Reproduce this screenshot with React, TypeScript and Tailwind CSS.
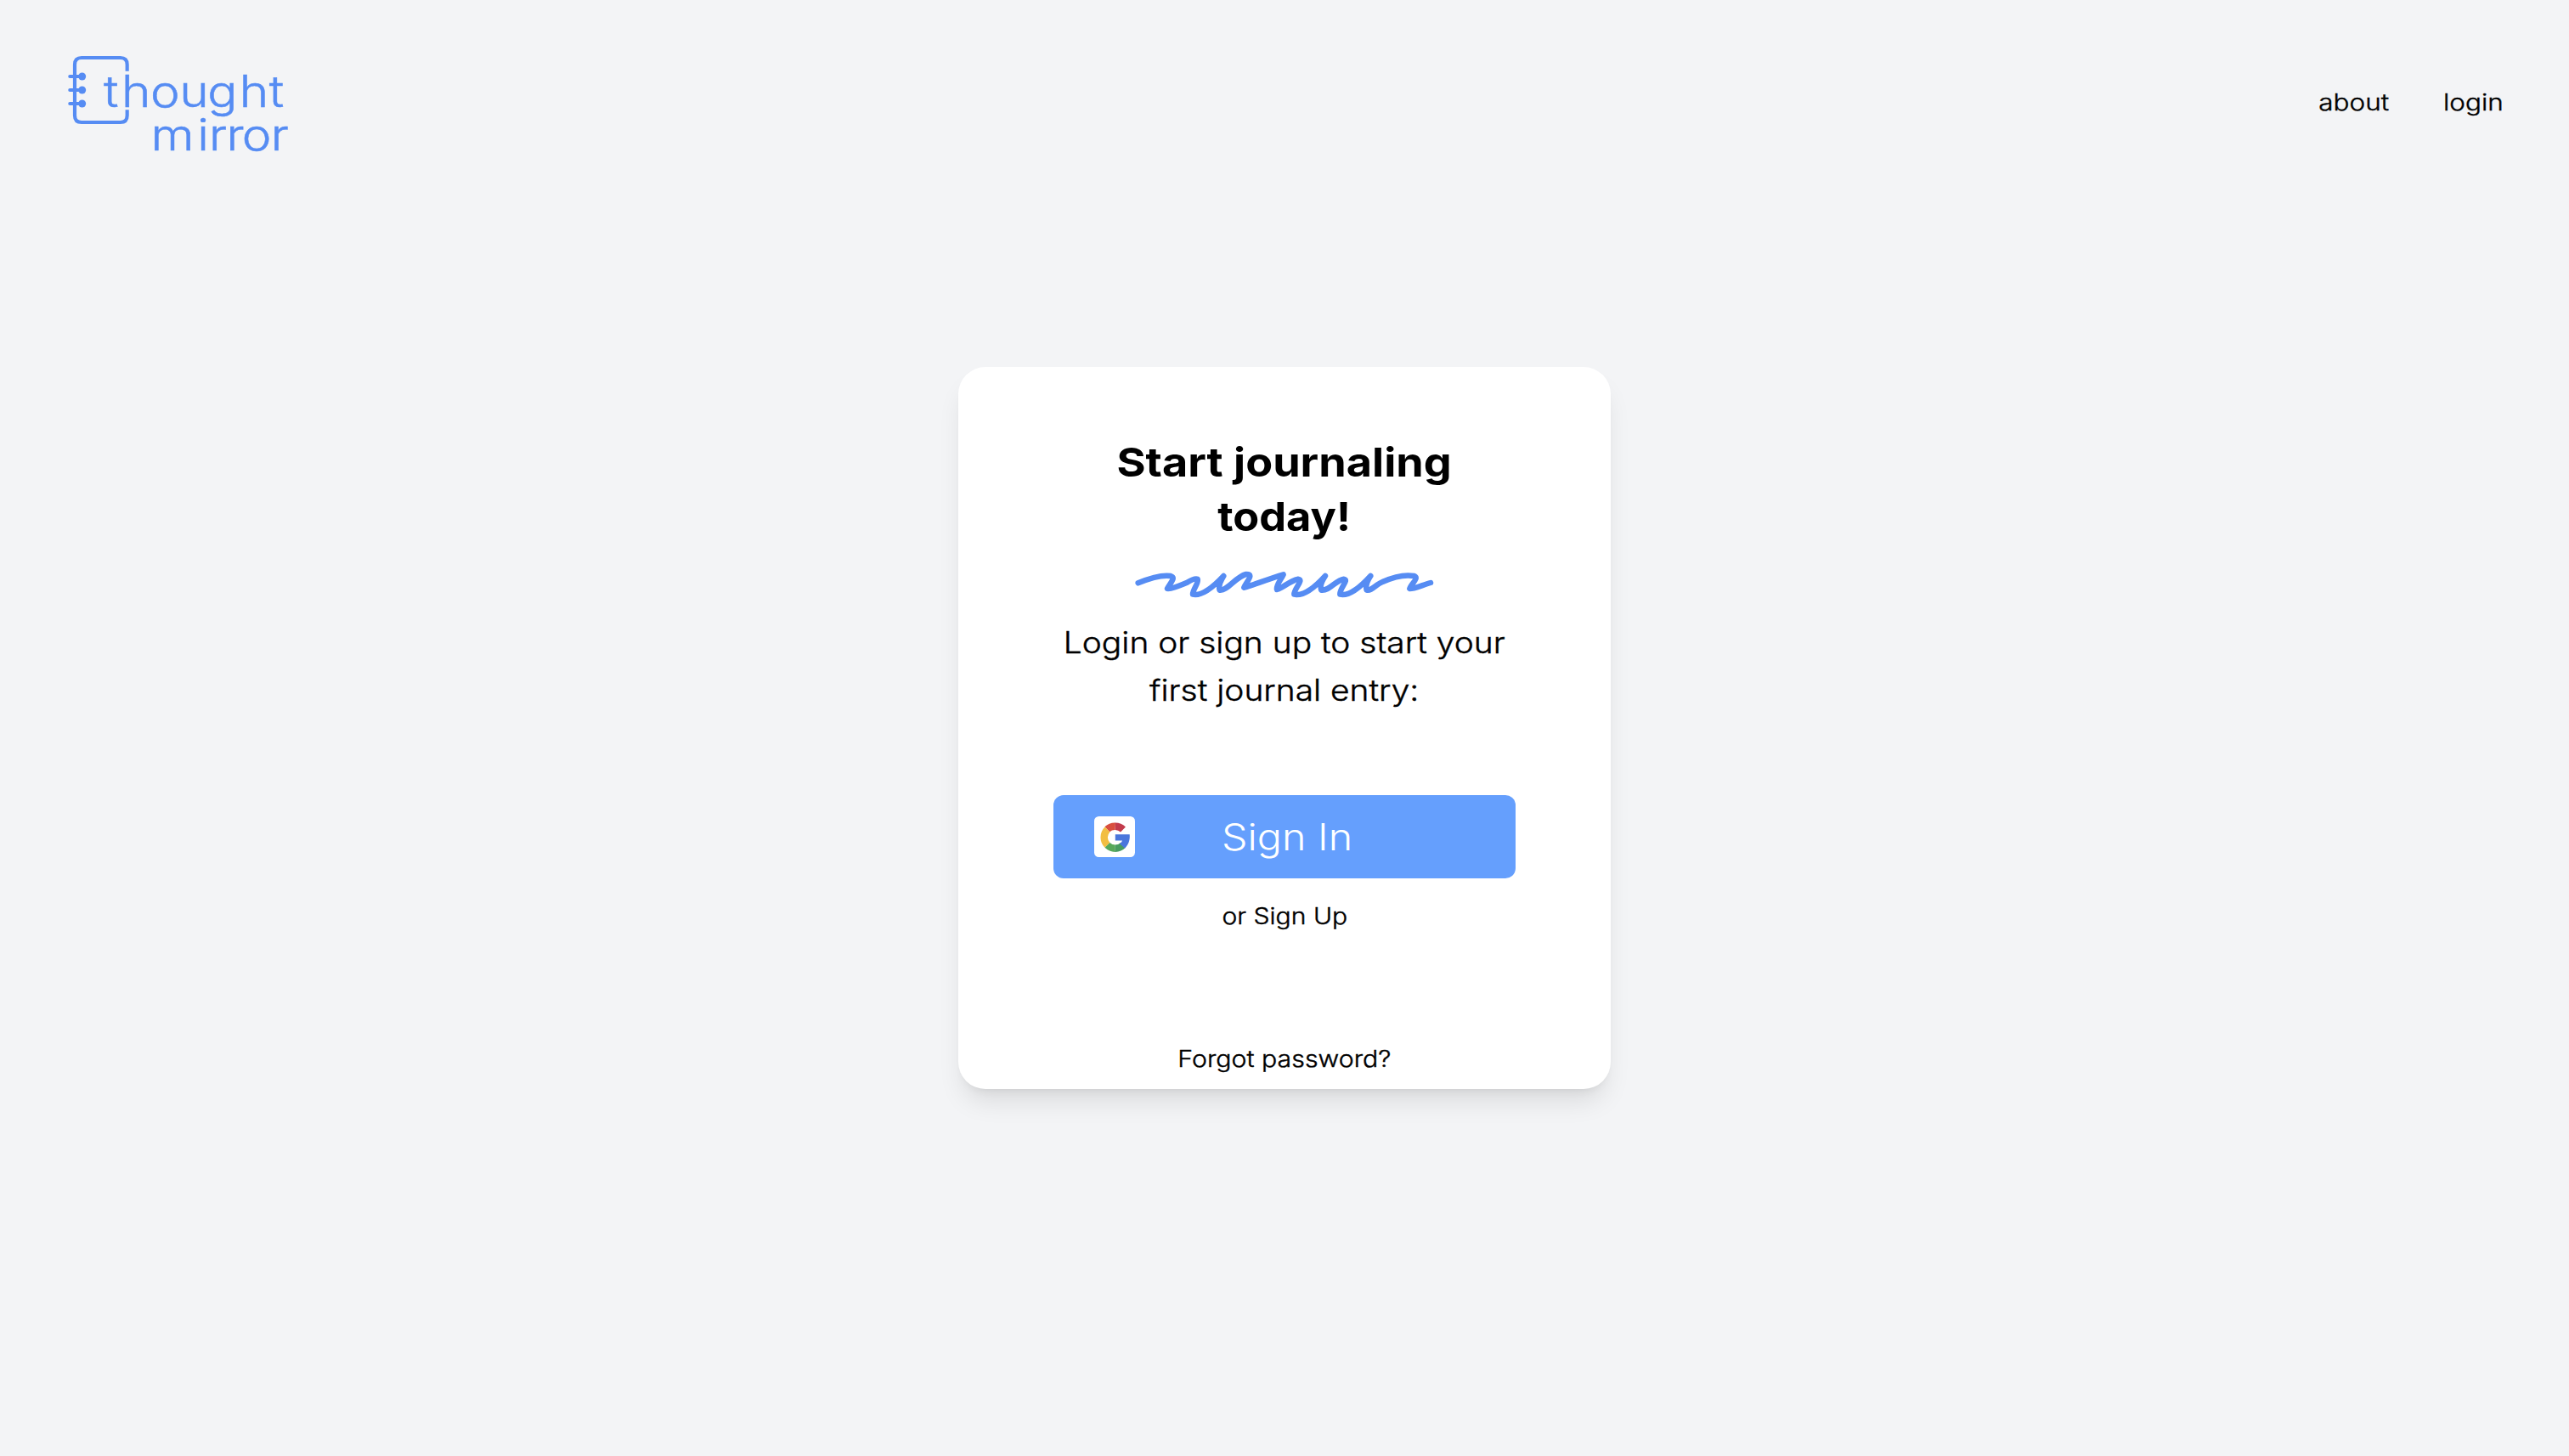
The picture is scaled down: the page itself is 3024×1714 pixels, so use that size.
import React from "react";

const Logo = () => (
  <svg
    viewBox="0 0 900 450"
    className="w-[300px] h-[150px]"
    fill="none"
    stroke="#568cf3"
    strokeWidth={12.5}
    strokeLinecap="round"
  >
    <path
      d="M269 101V78Q269 54 245 54H108Q84 54 84 78V258Q84 282 108 282H245Q269 282 269 258V238"
      strokeLinecap="butt"
    />
    {[120, 168, 216].map((y) => (
      <g key={y}>
        <path d={`M67 ${y}H110`} />
        <circle cx={110} cy={y} r={13.5} fill="#568cf3" stroke="none" />
      </g>
    ))}
    <g
      fill="#568cf3"
      strokeWidth={1.5}
      fontFamily="Inter, sans-serif"
      fontSize={154}
      fontWeight={300}
      transform="scale(1.14 1)"
    >
      <text x="163 218.4 307.9 398.2 485 583.3 675.4" y={227}>
        thought
      </text>
      <text x="309 453 489.5 543.5 591.5 681" y={382}>
        mirror
      </text>
    </g>
  </svg>
);

const Squiggle = () => (
  <svg viewBox="0 0 1140 180" className="w-[380px] h-[60px]" fill="none">
    <path
      d="M59 79C95 64 140 49 174 54C194 60 172 78 162 99C166 104 208 87 232 77C248 67 262 62 269 65C274 80 252 100 252 119C282 126 318 100 361 54C350 72 342 90 347 104C374 108 402 58 440 48C472 46 440 76 433 95C445 94 520 64 572 49C562 70 546 86 549 102C570 96 598 70 624 65C646 67 610 98 610 119C640 126 680 98 720 54C708 72 700 90 706 104C734 108 758 68 785 65C806 67 770 98 772 119C802 126 840 98 880 54C868 72 862 90 866 104C884 108 898 84 922 75C955 60 1000 48 1034 54C1052 62 1024 80 1018 99C1026 102 1064 86 1092 78"
      stroke="#568cf3"
      strokeWidth={19.5}
      strokeLinecap="round"
      strokeLinejoin="round"
    />
  </svg>
);

const GoogleIcon = () => (
  <svg viewBox="0 0 48 48" className="w-12 h-12">
    <rect width="48" height="48" rx="5.5" fill="#fff" />
    <g fill="none" strokeWidth="8.4">
      <path d="M15.3 15.3A13 13 0 0 1 24.8 11.7" stroke="#d94f3e" />
      <path d="M24.8 11.7A13 13 0 0 1 34 15.5" stroke="#c23b4c" />
      <path d="M15.5 15.5A13 13 0 0 0 15.5 33.9" stroke="#f2be42" />
      <path d="M15.5 33.9A13 13 0 0 0 24.8 37.7" stroke="#57a85a" />
      <path d="M24.8 37.7A13 13 0 0 0 34 33.9" stroke="#489c60" />
    </g>
    <path
      d="M24.8 21.3H41.7C42.4 28 40.2 33.6 36 37.6L30 32.2C31.6 31.2 32.6 30 33 28.6H24.8Z"
      fill="#4a76dc"
    />
  </svg>
);

const navLinks = ["about", "login"];

const App = () => {
  return (
    <div className="h-[1714px] bg-gray-100 text-black font-[Inter,sans-serif]">
      <header className="flex items-start justify-between pt-[50px] pl-[60px] pr-[77px]">
        <Logo />
        <nav className="flex gap-[74px] pt-[51px] text-[27px] leading-10 font-light [-webkit-text-stroke:0.4px]">
          {navLinks.map((link) => (
            <a
              key={link}
              href="#"
              className="inline-block origin-right scale-x-[1.165]"
            >
              {link}
            </a>
          ))}
        </nav>
      </header>

      <main className="flex justify-center pt-[232px]">
        <div className="flex flex-col items-center w-[768px] h-[850px] pt-20 rounded-[32px] bg-white text-center shadow-[0_20px_30px_-6px_rgba(0,0,0,0.1),0_8px_12px_-8px_rgba(0,0,0,0.1)]">
          <h1 className="text-[47px] leading-16 font-bold">
            <span className="block scale-x-[1.11]">Start journaling</span>
            <span className="block scale-x-[1.075]">today!</span>
          </h1>
          <div className="mt-5 mr-1">
            <Squiggle />
          </div>
          <p className="mt-2 text-[35px] leading-14 font-light [-webkit-text-stroke:0.4px] scale-x-[1.112]">
            Login or sign up to start your
            <br />
            first journal entry:
          </p>

          <button className="flex items-center w-[544px] h-[98px] mt-24 pl-12 rounded-xl bg-[#659ffd] text-white">
            <GoogleIcon />
            <span className="ml-[102px] text-[43px] font-light origin-left scale-x-[1.125]">
              Sign In
            </span>
          </button>
          <a
            href="#"
            className="mt-[25px] text-[27px] leading-10 font-light [-webkit-text-stroke:0.4px] scale-x-[1.115]"
          >
            or Sign Up
          </a>
          <a
            href="#"
            className="mt-32 text-[27px] leading-10 font-light [-webkit-text-stroke:0.4px] scale-x-[1.122]"
          >
            Forgot password?
          </a>
        </div>
      </main>
    </div>
  );
};

export default App;
